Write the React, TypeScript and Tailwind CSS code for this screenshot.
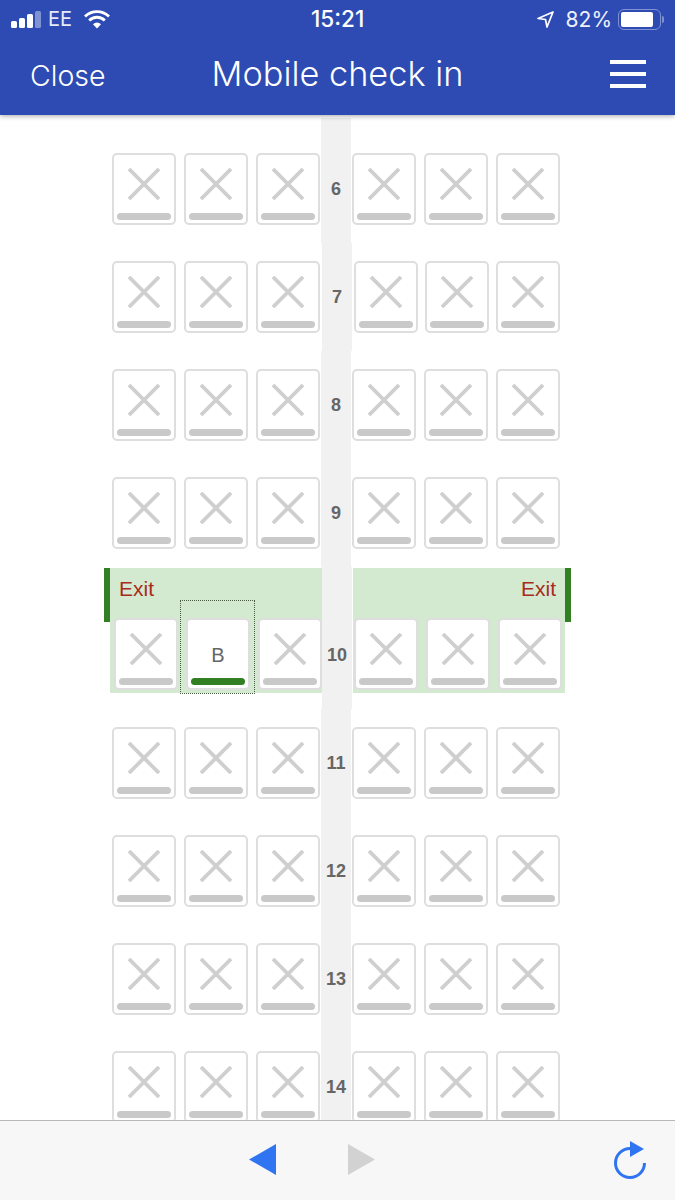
const rows = [
  { label: '6', shifted: false },
  { label: '7', shifted: true },
  { label: '8', shifted: false },
  { label: '9', shifted: false },
]

const lowerRows = ['11', '12', '13', '14']

function Cross() {
  return (
    <svg width="34" height="32" viewBox="0 0 34 32" className="mt-[13px]">
      <path d="M2 1 L32 31 M32 1 L2 31" stroke="#cfcfcf" strokeWidth="3.8" fill="none" />
    </svg>
  )
}

function Seat() {
  return (
    <div className="w-16 h-[72px] shrink-0 rounded-[5px] flex flex-col items-center bg-white border-2 border-[#dedede]">
      <Cross />
      <div className="w-[54px] h-[7px] rounded-full bg-[#c9c9c9] mt-auto mb-[3px]" />
    </div>
  )
}

function SelectedSeat() {
  return (
    <div className="w-16 h-[72px] shrink-0 rounded-[5px] flex flex-col items-center bg-white border-2 border-[#dedede] relative">
      <div className="mt-[23px] text-[20px] leading-[24px] text-[#666666] font-['Liberation_Sans',sans-serif]">B</div>
      <div className="w-[54px] h-[7px] rounded-full bg-[#337f23] mt-auto mb-[3px]" />
      <div className="absolute left-[-8px] top-[-20px] w-[75px] h-[94px] border border-dotted border-[#4a5a45]" />
    </div>
  )
}

function Aisle({ label, className }: { label: string; className: string }) {
  return (
    <div className={`w-[30px] shrink-0 self-stretch bg-[#f1f1f1] flex items-start justify-center ${className}`}>
      <span className="text-[18px] leading-[20px] font-bold text-[#666666] whitespace-nowrap font-['Liberation_Sans',sans-serif]">{label}</span>
    </div>
  )
}

function SeatRow({ label, shifted }: { label: string; shifted?: boolean }) {
  return (
    <div className="h-[108px] flex pl-[112px]">
      <div className="flex gap-2 pt-[18px]">
        <Seat />
        <Seat />
        <Seat />
      </div>
      <Aisle label={label} className={`pt-[44px] ${shifted ? 'mx-[2px]' : 'mx-px'}`} />
      <div className={`flex pt-[18px] ${shifted ? 'gap-[7px]' : 'gap-2'}`}>
        <Seat />
        <Seat />
        <Seat />
      </div>
    </div>
  )
}

function ExitRow() {
  return (
    <div className="h-[142px] flex pl-[110px] pt-px">
      <div className="relative w-[212px] h-[125px] bg-[#d4ead0] px-1 flex flex-col shrink-0">
        <div className="absolute left-[-6px] top-0 w-[6px] h-[54px] bg-[#337f23]" />
        <div className="text-[21px] leading-[24px] text-[#a92b20] mt-[9px] ml-[5px] font-['Liberation_Sans',sans-serif]">Exit</div>
        <div className="flex gap-2 mt-[17px]">
          <Seat />
          <SelectedSeat />
          <Seat />
        </div>
      </div>
      <Aisle label="10" className="pt-[78px] -mt-px" />
      <div className="relative w-[212px] h-[125px] ml-px bg-[#d4ead0] pl-px flex flex-col shrink-0">
        <div className="absolute right-[-6px] top-0 w-[6px] h-[54px] bg-[#337f23]" />
        <div className="text-[21px] leading-[24px] text-[#a92b20] mt-[9px] mr-[9px] text-right font-['Liberation_Sans',sans-serif]">Exit</div>
        <div className="flex gap-2 mt-[17px]">
          <Seat />
          <Seat />
          <Seat />
        </div>
      </div>
    </div>
  )
}

function StatusBar() {
  return (
    <div className="h-[38px] shrink-0 relative flex items-center text-white font-['Inter',sans-serif]">
      <div className="flex items-end gap-[2px] ml-[11px] h-[17px]">
        <div className="w-[6px] h-[7px] rounded-[1.5px] bg-white" />
        <div className="w-[6px] h-[10px] rounded-[1.5px] bg-white" />
        <div className="w-[6px] h-[14px] rounded-[1.5px] bg-white" />
        <div className="w-[6px] h-[17px] rounded-[1.5px] bg-[#7f92d4]" />
      </div>
      <span className="ml-[7px] text-[20px] leading-none text-[#e6eaf8]">EE</span>
      <svg width="26" height="19" viewBox="0 0 26 19" className="ml-[12px]">
        <path d="M1 6.5 A17 17 0 0 1 25 6.5" stroke="white" strokeWidth="2.8" fill="none" />
        <path d="M5.2 10.5 A11 11 0 0 1 20.8 10.5" stroke="white" strokeWidth="2.8" fill="none" />
        <path d="M9 14.3 A5.5 5.5 0 0 1 17 14.3 L13 18.5 Z" fill="white" />
      </svg>
      <span className="absolute left-[311px] top-[7px] text-[22.5px] leading-[24px] font-medium">15:21</span>
      <svg width="17" height="17" viewBox="0 0 17 17" className="ml-auto">
        <path d="M1 7.5 L16 1 L10 16 L8.5 8.5 Z" stroke="white" strokeWidth="1.7" fill="none" strokeLinejoin="round" />
      </svg>
      <span className="ml-[12px] text-[21px] leading-none text-[#eef1fb]">82%</span>
      <div className="ml-[6px] w-[43px] h-[21px] rounded-[6px] border-[1.5px] border-[#7f92d4] p-[2px]">
        <div className="w-[32px] h-full rounded-[2px] bg-white" />
      </div>
      <div className="w-[2px] h-[7px] bg-[#7f92d4] ml-px mr-[11px] rounded-r-full" />
    </div>
  )
}

export default function App() {
  return (
    <div className="w-[675px] h-[1200px] flex flex-col bg-white overflow-hidden">
      <header className="h-[115px] shrink-0 flex flex-col bg-[#2d4bb3] shadow-[0_1px_5px_rgba(0,0,0,0.35)] relative z-10">
        <StatusBar />
        <div className="flex-1 grid grid-cols-[1fr_auto_1fr] items-center text-white font-['Inter',sans-serif] pb-[6px]">
          <span className="ml-[30px] mt-[5px] text-[28.5px] leading-none font-light">Close</span>
          <span className="mt-[2px] text-[34.3px] leading-none font-light whitespace-nowrap">Mobile check in</span>
          <div className="justify-self-end mr-[29px] w-9 flex flex-col gap-2">
            <div className="h-1 bg-white" />
            <div className="h-1 bg-white" />
            <div className="h-1 bg-white" />
          </div>
        </div>
      </header>

      <main className="flex-1 min-h-0 overflow-hidden pt-[3px]">
        <div className="h-[17px] w-[30px] bg-[#f1f1f1] ml-[321px]" />
        {rows.map((row) => (
          <SeatRow key={row.label} label={row.label} shifted={row.shifted} />
        ))}
        <ExitRow />
        {lowerRows.map((label) => (
          <SeatRow key={label} label={label} />
        ))}
      </main>

      <footer className="h-20 shrink-0 relative bg-[#f7f7f7] border-t border-[#b8b8b8] flex items-center">
        <svg width="28" height="31" viewBox="0 0 28 31" className="ml-[249px] -mt-[2px]">
          <path d="M27 0 V31 L0 15.5 Z" fill="#2f74f0" />
        </svg>
        <svg width="28" height="31" viewBox="0 0 28 31" className="ml-[70px] -mt-[2px]">
          <path d="M1 0 V31 L28 15.5 Z" fill="#d2d2d2" />
        </svg>
        <svg width="36" height="40" viewBox="0 0 36 40" className="ml-auto mr-[27px]">
          <path d="M18 7.5 A14.5 14.5 0 1 0 32.5 22" stroke="#2f74f0" strokeWidth="3" fill="none" />
          <path d="M18 0 L32 8 L18 16 Z" fill="#2f74f0" />
        </svg>
      </footer>
    </div>
  )
}
